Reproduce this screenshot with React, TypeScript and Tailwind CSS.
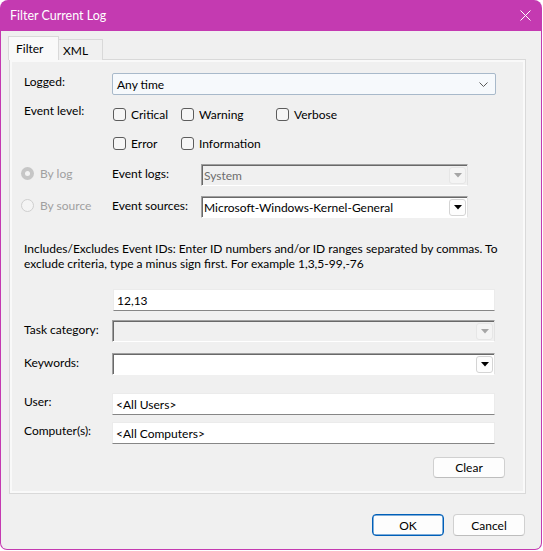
import clsx from "clsx";

const Checkbox = ({ label, className }: { label: string; className?: string }) => (
  <label className={clsx("flex items-center gap-[5px] h-[16px]", className)}>
    <span className="w-[13px] h-[13px] rounded-[3px] border border-[#5c5c5c] bg-[#f6f6f6]" />
    <span className="pt-[1px]">{label}</span>
  </label>
);

const Triangle = ({ disabled }: { disabled?: boolean }) => (
  <svg width="8" height="5" viewBox="0 0 8 5">
    <polygon points="0,0 8,0 4,4.5" fill={disabled ? "#a6a6a6" : "#000"} />
  </svg>
);

const LegacyCombo = ({
  value,
  disabled,
  className,
}: {
  value?: string;
  disabled?: boolean;
  className?: string;
}) => (
  <div
    className={clsx(
      "h-[22px] flex items-center border border-t-[#a0a0a0] border-l-[#a0a0a0] border-b-white border-r-[#e3e3e3] shadow-[inset_1px_1px_0_#696969]",
      disabled ? "bg-[#f0f0f0] text-[#6d6d6d]" : "bg-white text-black",
      className
    )}
  >
    <span className="flex-1 pl-[2px] pt-[2px] truncate">{value}</span>
    <span
      className={clsx(
        "w-[17px] h-[17px] mr-[1px] mt-[1px] rounded-[3px] border flex items-center justify-center",
        disabled ? "border-[#e6e6e6] bg-[#f4f4f4]" : "border-[#d4d4d4] bg-[#fdfdfd]"
      )}
    >
      <Triangle disabled={disabled} />
    </span>
  </div>
);

const TextBox = ({ value, className }: { value: string; className?: string }) => (
  <div
    className={clsx(
      "h-[22px] bg-white border border-[#ebebeb] border-b-[#868686] flex items-center pl-[3px] pt-[1px]",
      className
    )}
  >
    {value}
  </div>
);

const Button = ({ label, primary, className }: { label: string; primary?: boolean; className?: string }) => (
  <button
    className={clsx(
      "w-[72px] rounded-[4px] bg-[#fdfdfd] flex items-center justify-center pt-[1px]",
      primary ? "border border-[#005fb8] shadow-[inset_0_0_0_0.5px_#005fb8]" : "border border-[#d0d0d0] border-b-[#bdbdbd]",
      className
    )}
  >
    {label}
  </button>
);

export default function App() {
  return (
    <div className="w-[543px] h-[551px] bg-white font-['Lato','Liberation_Sans',sans-serif] text-[12px] leading-[16px] text-black">
      <div className="w-[542px] h-[550px] flex flex-col rounded-t-[8px] rounded-b-[7px] overflow-hidden bg-[#c43ab1]">
        {/* title bar */}
        <div className="h-[31px] flex items-center justify-between pl-[10px] pr-[11px] text-white text-[12.5px]">
          <span className="pt-[1px]">Filter Current Log</span>
          <svg width="11" height="11" viewBox="0 0 11 11">
            <path d="M0.5 0.5 L10.5 10.5 M10.5 0.5 L0.5 10.5" stroke="#fff" strokeWidth="1" />
          </svg>
        </div>

        {/* body */}
        <div className="flex-1 mx-[1px] mb-[1px] rounded-b-[6px] bg-[#f0f0f0] flex flex-col pl-[7px]">
          {/* tabs */}
          <div className="flex items-end h-[29px] relative z-10">
            <div className="w-[51px] h-[24px] bg-[#f9f9f9] border border-b-0 border-[#d9d9d9] pl-[7px] pt-[4px]">
              Filter
            </div>
            <div className="w-[44px] h-[21px] bg-[#f0f0f0] border border-l-0 border-b-0 border-[#d9d9d9] pl-[4px] pt-[3px]">
              XML
            </div>
          </div>

          {/* panel */}
          <div className="ml-[1px] -mt-px w-[517px] h-[435px] border border-[#d9d9d9] shadow-[inset_2px_2px_0_#f9f9f9,inset_-2px_-2px_0_#f9f9f9] bg-[#f0f0f0] flex flex-col pl-[14px]">
            {/* Logged */}
            <div className="flex items-start mt-[13px]">
              <span className="w-[88px] pt-[1px]">Logged:</span>
              <div className="w-[384px] h-[22px] rounded-[2px] border border-[#a8b9ca] bg-[#f6f9fc] flex items-center justify-between pl-[4px] pr-[7px]">
                <span className="pt-[1px]">Any time</span>
                <svg width="9" height="5" viewBox="0 0 9 5">
                  <path d="M0.5 0.5 L4.5 4.5 L8.5 0.5" stroke="#5a5a5a" strokeWidth="1" fill="none" />
                </svg>
              </div>
            </div>

            {/* Event level */}
            <div className="flex items-start mt-[8px]">
              <span className="w-[88px]">Event level:</span>
              <div className="pt-[3px] pl-[1px] grid grid-cols-[68px_95px_auto] gap-y-[13px]">
                <Checkbox label="Critical" />
                <Checkbox label="Warning" />
                <Checkbox label="Verbose" />
                <Checkbox label="Error" />
                <Checkbox label="Information" />
              </div>
            </div>

            {/* By log / By source */}
            <div className="flex flex-col gap-[10px] mt-[13px] -ml-[3px]">
              <div className="flex items-start">
                <div className="w-[91px] flex items-center gap-[6px] text-[#a0a0a0] pt-[1px]">
                  <span className="w-[13px] h-[13px] rounded-full bg-[#c6c6c6] flex items-center justify-center">
                    <span className="w-[5px] h-[5px] rounded-full bg-[#f3f3f3]" />
                  </span>
                  <span className="pt-[1px]">By log</span>
                </div>
                <span className="w-[89px] pt-[2px]">Event logs:</span>
                <LegacyCombo value="System" disabled className="w-[267px]" />
              </div>
              <div className="flex items-start">
                <div className="w-[91px] flex items-center gap-[6px] text-[#a0a0a0] pt-[1px]">
                  <span className="w-[13px] h-[13px] rounded-full border border-[#cfcfcf] bg-[#f4f4f4]" />
                  <span className="pt-[1px]">By source</span>
                </div>
                <span className="w-[89px] pt-[2px]">Event sources:</span>
                <LegacyCombo value="Microsoft-Windows-Kernel-General" className="w-[267px]" />
              </div>
            </div>

            {/* Event IDs */}
            <p className="mt-[23px] leading-[15px]">
              Includes/Excludes Event IDs: Enter ID numbers and/or ID ranges separated by commas. To
              <br />
              exclude criteria, type a minus sign first. For example 1,3,5-99,-76
            </p>
            <TextBox value="12,13" className="mt-[18px] ml-[89px] w-[382px]" />

            {/* Task category / Keywords */}
            <div className="flex items-start mt-[9px]">
              <span className="w-[88px] pt-[2px]">Task category:</span>
              <LegacyCombo disabled className="w-[383px]" />
            </div>
            <div className="flex items-start mt-[11px]">
              <span className="w-[88px] pt-[2px]">Keywords:</span>
              <LegacyCombo className="w-[383px]" />
            </div>

            {/* User / Computer */}
            <div className="flex items-start mt-[18px]">
              <span className="w-[88px] pt-[1px]">User:</span>
              <TextBox value="<All Users>" className="w-[383px]" />
            </div>
            <div className="flex items-start mt-[7px]">
              <span className="w-[88px] pt-[1px]">Computer(s):</span>
              <TextBox value="<All Computers>" className="w-[383px]" />
            </div>

            <div className="flex justify-end mt-[13px] pr-[20px]">
              <Button label="Clear" className="h-[21px]" />
            </div>
          </div>

          {/* dialog buttons */}
          <div className="flex justify-end gap-[9px] mt-[20px] pr-[16px]">
            <Button label="OK" primary className="h-[22px]" />
            <Button label="Cancel" className="h-[22px]" />
          </div>
        </div>
      </div>
    </div>
  );
}
